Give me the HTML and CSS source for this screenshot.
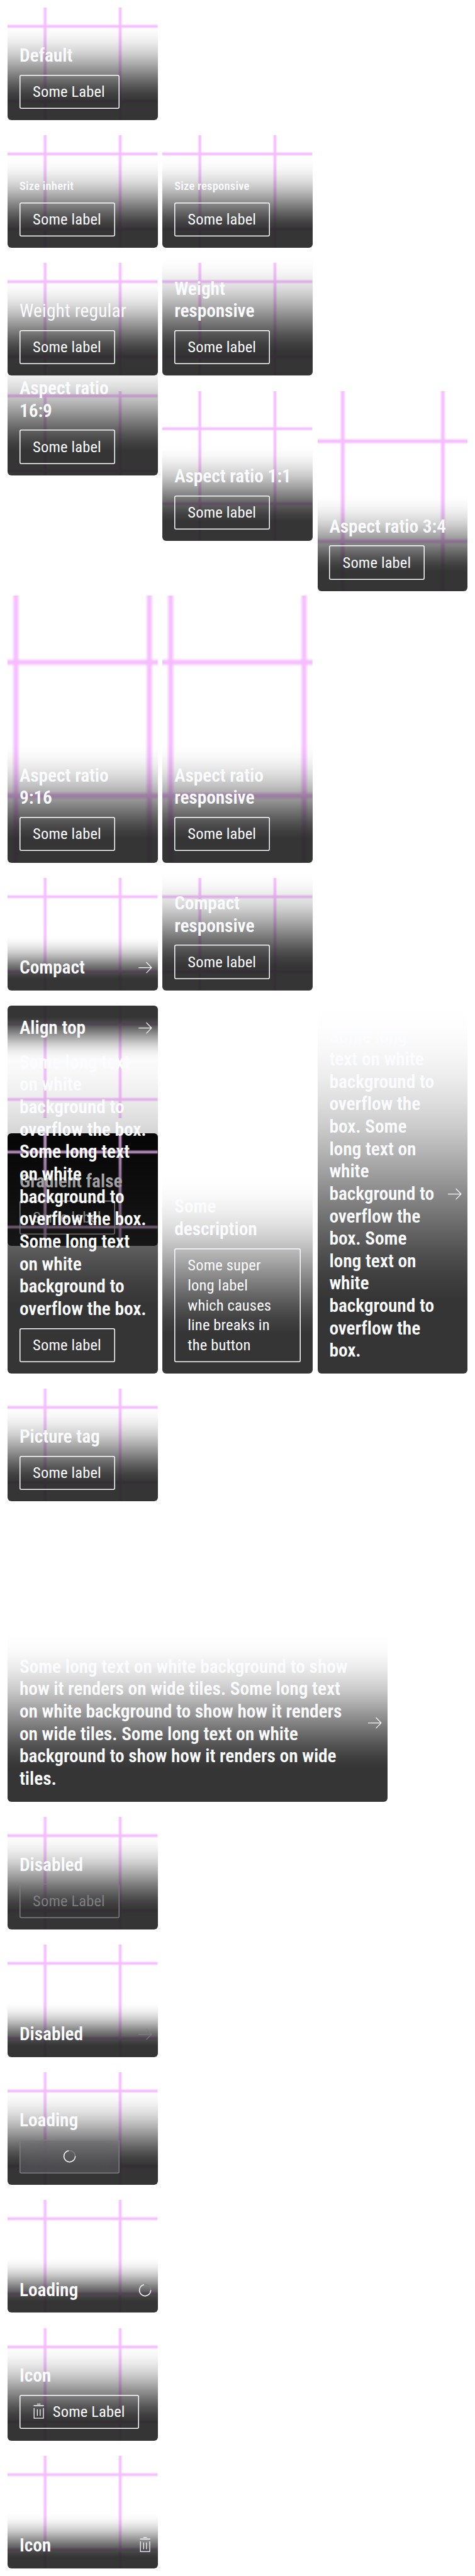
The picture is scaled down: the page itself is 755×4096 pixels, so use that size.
FILE: index.html
```html
<!DOCTYPE html>
<html lang="en">
<head>
<meta charset="utf-8">
<title>Button tiles</title>
<link rel="stylesheet" href="styles.css">
</head>
<body>
<svg class="defs" aria-hidden="true">
  <defs>
    <linearGradient id="fade-x">
      <stop offset="0" stop-color="#f5bcff" stop-opacity="0"/>
      <stop offset=".4" stop-color="#f5bcff" stop-opacity=".95"/>
      <stop offset=".6" stop-color="#f5bcff" stop-opacity=".95"/>
      <stop offset="1" stop-color="#f5bcff" stop-opacity="0"/>
    </linearGradient>
    <linearGradient id="fade-y" href="#fade-x" x1="0" y1="0" x2="0" y2="1"/>
    <symbol id="grid" viewBox="0 0 316 316" preserveAspectRatio="xMidYMid slice">
      <rect x="74" y="0" width="10" height="316" fill="url(#fade-x)"/>
      <rect x="232" y="0" width="10" height="316" fill="url(#fade-x)"/>
      <rect x="0" y="74" width="316" height="10" fill="url(#fade-y)"/>
      <rect x="0" y="232" width="316" height="10" fill="url(#fade-y)"/>
    </symbol>
    <symbol id="arrow" viewBox="0 0 36 36">
      <path d="M4 18H31.4M20.6 6.6L31.6 18L20.6 29.4" fill="none" stroke="currentColor" stroke-width="1.6"/>
    </symbol>
    <symbol id="trash" viewBox="0 0 36 36">
      <path d="M7.2 4.3H28.8M14.3 .8H21.7M8.2 9.4V30.5H27.8V9.4M15 11.5V25.8M21 11.5V25.8" fill="none" stroke="currentColor" stroke-width="1.7"/>
    </symbol>
    <symbol id="spinner" viewBox="0 0 36 36">
      <circle cx="18" cy="18" r="12" fill="none" stroke="#7e7f83" stroke-width="2"/>
      <path d="M30 18A12 12 0 1 1 16 6.2" fill="none" stroke="currentColor" stroke-width="2"/>
    </symbol>
  </defs>
</svg>

<section class="row">
  <div class="tile"><svg class="media"><use href="#grid"/></svg>
    <div class="footer"><p class="text">Default</p><span class="btn cap"><span class="label">Some Label</span></span></div></div>
</section>

<section class="row">
  <div class="tile"><svg class="media"><use href="#grid"/></svg>
    <div class="footer"><p class="text small">Size inherit</p><span class="btn"><span class="label">Some label</span></span></div></div>
  <div class="tile"><svg class="media"><use href="#grid"/></svg>
    <div class="footer"><p class="text small">Size responsive</p><span class="btn"><span class="label">Some label</span></span></div></div>
</section>

<section class="row">
  <div class="tile"><svg class="media"><use href="#grid"/></svg>
    <div class="footer"><p class="text regular">Weight regular</p><span class="btn"><span class="label">Some label</span></span></div></div>
  <div class="tile"><svg class="media"><use href="#grid"/></svg>
    <div class="footer"><p class="text">Weight<br>responsive</p><span class="btn"><span class="label">Some label</span></span></div></div>
</section>

<section class="row">
  <div class="tile r16x9"><svg class="media"><use href="#grid"/></svg>
    <div class="footer"><p class="text">Aspect ratio<br>16:9</p><span class="btn"><span class="label">Some label</span></span></div></div>
  <div class="tile r1x1"><svg class="media"><use href="#grid"/></svg>
    <div class="footer"><p class="text">Aspect ratio 1:1</p><span class="btn"><span class="label">Some label</span></span></div></div>
  <div class="tile r3x4"><svg class="media"><use href="#grid"/></svg>
    <div class="footer"><p class="text">Aspect ratio 3:4</p><span class="btn"><span class="label">Some label</span></span></div></div>
  <div class="tile r9x16"><svg class="media"><use href="#grid"/></svg>
    <div class="footer"><p class="text">Aspect ratio<br>9:16</p><span class="btn"><span class="label">Some label</span></span></div></div>
  <div class="tile r9x16"><svg class="media"><use href="#grid"/></svg>
    <div class="footer"><p class="text">Aspect ratio<br>responsive</p><span class="btn"><span class="label">Some label</span></span></div></div>
</section>

<section class="row">
  <div class="tile"><svg class="media"><use href="#grid"/></svg>
    <div class="footer compact"><p class="text">Compact</p><svg class="icon"><use href="#arrow"/></svg></div></div>
  <div class="tile"><svg class="media"><use href="#grid"/></svg>
    <div class="footer"><p class="text">Compact<br>responsive</p><span class="btn"><span class="label">Some label</span></span></div></div>
</section>

<section class="row">
  <div class="tile"><svg class="media"><use href="#grid"/></svg>
    <div class="footer compact top"><p class="text">Align top</p><svg class="icon"><use href="#arrow"/></svg></div></div>
</section>

<section class="row">
  <div class="tile black"><svg class="media"><use href="#grid"/></svg>
    <div class="footer plain"><p class="text">Gradient false</p><span class="btn"><span class="label">Some label</span></span></div></div>
</section>

<section class="row">
  <div class="tile">
    <div class="footer"><p class="text">Some long text<br>on white<br>background to<br>overflow the box.<br>Some long text<br>on white<br>background to<br>overflow the box.<br>Some long text<br>on white<br>background to<br>overflow the box.</p><span class="btn"><span class="label">Some label</span></span></div></div>
  <div class="tile">
    <div class="footer"><p class="text">Some<br>description</p><span class="btn multi"><span class="label">Some super<br>long label<br>which causes<br>line breaks in<br>the button</span></span></div></div>
  <div class="tile">
    <div class="footer compact"><p class="text">Some long<br>text on white<br>background to<br>overflow the<br>box. Some<br>long text on<br>white<br>background to<br>overflow the<br>box. Some<br>long text on<br>white<br>background to<br>overflow the<br>box.</p><svg class="icon"><use href="#arrow"/></svg></div></div>
</section>

<section class="row">
  <div class="tile"><svg class="media"><use href="#grid"/></svg>
    <div class="footer"><p class="text">Picture tag</p><span class="btn"><span class="label">Some label</span></span></div></div>
</section>

<section class="row">
  <div class="tile wide">
    <div class="footer compact"><p class="text">Some long text on white background to show<br>how it renders on wide tiles. Some long text<br>on white background to show how it renders<br>on wide tiles. Some long text on white<br>background to show how it renders on wide<br>tiles.</p><svg class="icon"><use href="#arrow"/></svg></div></div>
</section>

<section class="row">
  <div class="tile"><svg class="media"><use href="#grid"/></svg>
    <div class="footer"><p class="text">Disabled</p><span class="btn cap disabled"><span class="label">Some Label</span></span></div></div>
</section>

<section class="row">
  <div class="tile"><svg class="media"><use href="#grid"/></svg>
    <div class="footer compact"><p class="text">Disabled</p><svg class="icon disabled"><use href="#arrow"/></svg></div></div>
</section>

<section class="row">
  <div class="tile"><svg class="media"><use href="#grid"/></svg>
    <div class="footer"><p class="text">Loading</p><span class="btn cap loading"><svg class="icon"><use href="#spinner"/></svg></span></div></div>
</section>

<section class="row">
  <div class="tile"><svg class="media"><use href="#grid"/></svg>
    <div class="footer compact"><p class="text">Loading</p><svg class="icon"><use href="#spinner"/></svg></div></div>
</section>

<section class="row">
  <div class="tile"><svg class="media"><use href="#grid"/></svg>
    <div class="footer"><p class="text">Icon</p><span class="btn with-icon"><svg class="icon"><use href="#trash"/></svg><span class="label">Some Label</span></span></div></div>
</section>

<section class="row">
  <div class="tile"><svg class="media"><use href="#grid"/></svg>
    <div class="footer compact"><p class="text">Icon</p><svg class="icon"><use href="#trash"/></svg></div></div>
</section>
</body>
</html>
```
FILE: styles.css
```css
* { box-sizing: border-box; }

body {
  margin: 0;
  padding: 16px 0 15px 16px;
  zoom: 0.7553;
  background: #fff;
  color: #fbfcff;
  font-family: Roboto, "Liberation Sans", sans-serif;
  display: flex;
  flex-direction: column;
  gap: 32px;
}

.defs { position: absolute; width: 0; height: 0; }

.row {
  display: flex;
  flex-wrap: wrap;
  align-items: flex-start;
  gap: 10px;
}

.tile {
  display: grid;
  grid-template: minmax(0, 1fr) / minmax(0, 1fr);
  width: 316px;
  height: 237px;
  flex: none;
  isolation: isolate;
  border-radius: 8px;
}
.r16x9 { height: 177.75px; }
.r1x1 { height: 316px; }
.r3x4 { height: 421.33px; }
.r9x16 { height: 561.78px; }
.wide { width: 800px; height: 600px; }
.black { background: #000; }

.media {
  grid-area: 1 / 1;
  width: 100%;
  height: 100%;
  border-radius: 8px;
  overflow: hidden;
}

.footer {
  --dir: to top;
  grid-area: 1 / 1;
  align-self: end;
  z-index: 1;
  display: flex;
  flex-direction: column;
  align-items: flex-start;
  gap: 16px;
  padding: 48px 25px 24px;
  border-radius: 0 0 8px 8px;
  background: linear-gradient(var(--dir),
    rgba(31, 31, 31, .9) 0%,
    rgba(31, 31, 31, .9) 20%,
    rgba(31, 31, 31, .852589) 26.67%,
    rgba(31, 31, 31, .768225) 33.33%,
    rgba(31, 31, 31, .668116) 40%,
    rgba(31, 31, 31, .557309) 46.67%,
    rgba(31, 31, 31, .442691) 53.33%,
    rgba(31, 31, 31, .331884) 60%,
    rgba(31, 31, 31, .231775) 66.67%,
    rgba(31, 31, 31, .147411) 73.33%,
    rgba(31, 31, 31, .0816599) 80%,
    rgba(31, 31, 31, .03551) 86.67%,
    rgba(31, 31, 31, .0086472) 93.33%,
    rgba(31, 31, 31, 0) 100%);
}
.plain { background: none; }

.compact {
  flex-direction: row;
  align-items: center;
  justify-content: space-between;
  padding-right: 9px;
}
.top {
  --dir: to bottom;
  align-self: start;
  padding-top: 24px;
  padding-bottom: 48px;
  border-radius: 8px 8px 0 0;
}

.text {
  margin: 0;
  font-size: 39px;
  line-height: 47.2px;
  font-weight: 600;
  font-stretch: 87%;
  letter-spacing: -.1px;
  white-space: nowrap;
}
.small { font-size: 24.5px; line-height: 34px; letter-spacing: .3px; }
.regular { font-weight: 390; letter-spacing: .2px; }

.btn {
  display: flex;
  width: 201px;
  padding: 15px 28px;
  border-radius: 4px;
  box-shadow: inset 0 0 0 2px currentColor;
  font-size: 32.5px;
  line-height: 42px;
  font-weight: 385;
  font-stretch: 87%;
  letter-spacing: .2px;
  white-space: nowrap;
}
.cap { width: 210px; }
.multi { width: 266px; }
.with-icon { width: 252px; gap: 11px; align-items: center; padding-left: 23px; }
.disabled { color: #7e7f83; }
.loading {
  height: 72px;
  align-items: center;
  justify-content: center;
  background: rgba(126, 127, 131, .3);
  -webkit-backdrop-filter: blur(16px);
  backdrop-filter: blur(16px);
  box-shadow: inset 0 0 0 2px #7e7f83;
}

.icon { width: 36px; height: 36px; flex: none; }
```
